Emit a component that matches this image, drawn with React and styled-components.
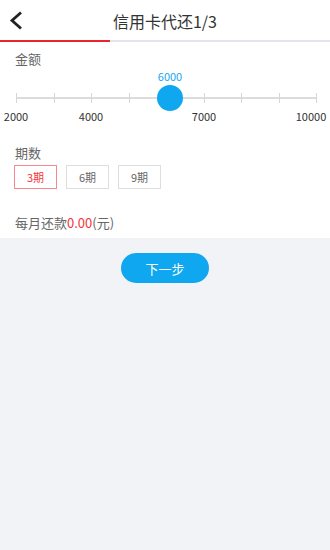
import styled, { createGlobalStyle } from "styled-components";

const GlobalStyle = createGlobalStyle`
  html, body {
    margin: 0;
    padding: 0;
    background: #f2f3f7;
    font-family: "Noto Sans CJK SC", "Noto Sans", sans-serif;
  }
`;

const ticks = [0, 1, 2, 3, 4, 5, 6, 7, 8];
const marks = [
  { label: "2000", x: 16 },
  { label: "4000", x: 91 },
  { label: "7000", x: 204 },
  { label: "10000", x: 311 },
];
const terms = ["3期", "6期", "9期"];

const App = () => {
  // const [term, setTerm] = useState(0);

  return (
    <>
      <GlobalStyle />
      <Page>
        <TopBar>
          <BackButton>
            <svg width="24" height="24" viewBox="0 0 24 24">
              <path d="M20 3.5 L11 11.5 L20 19.5" fill="none" stroke="#222" strokeWidth="2.8" strokeLinejoin="miter" />
            </svg>
          </BackButton>
          <Title>信用卡代还1/3</Title>
          <span />
        </TopBar>
        <StepLine>
          <StepDone />
          <StepLeft />
        </StepLine>
        <Form>
          <Label>金额</Label>
          <Slider>
            <ValueText>6000</ValueText>
            <Track />
            {ticks.map((i) => (
              <Tick key={i} style={{ left: 16 + i * 37.5 }} />
            ))}
            <Thumb />
            {marks.map((m) => (
              <Mark key={m.label} style={{ left: m.x }}>
                {m.label}
              </Mark>
            ))}
          </Slider>
          <Label $top={20}>期数</Label>
          <TermRow>
            {terms.map((t, i) => (
              <TermButton key={t} $active={i === 0}>
                {t}
              </TermButton>
            ))}
          </TermRow>
          <Summary>
            每月还款<Money>0.00</Money>(元)
          </Summary>
        </Form>
        <Bottom>
          <NextButton>下一步</NextButton>
        </Bottom>
      </Page>
    </>
  );
};

const Page = styled.div`
  width: 330px;
  min-height: 550px;
  background: #f2f3f7;
`;

const TopBar = styled.div`
  display: grid;
  grid-template-columns: 40px 1fr 40px;
  align-items: center;
  height: 40px;
  background: #fff;
`;

const BackButton = styled.div`
  display: flex;
  align-items: center;
  padding-left: 1px;
  padding-top: 2px;
`;

const Title = styled.div`
  text-align: center;
  font-size: 16px;
  color: #333;
  padding-top: 2px;
`;

const StepLine = styled.div`
  display: flex;
  height: 2px;
  background: #fff;
`;

const StepDone = styled.div`
  width: 110px;
  background: #e8262b;
`;

const StepLeft = styled.div`
  flex: 1;
  background: #e2e5ef;
`;

const Form = styled.div`
  background: #fff;
  padding: 8px 0 6px;
`;

const Label = styled.div`
  font-size: 13px;
  line-height: 18px;
  color: #666;
  padding: 0 15px;
  margin-top: ${(p) => p.$top || 0}px;
`;

const Slider = styled.div`
  position: relative;
  height: 56px;
`;

const ValueText = styled.div`
  position: absolute;
  top: 2px;
  left: 170px;
  transform: translateX(-50%);
  font-size: 11px;
  line-height: 13px;
  color: #16a6ee;
`;

const Track = styled.div`
  position: absolute;
  top: 29px;
  left: 16px;
  width: 300px;
  height: 2px;
  background: #dcdcdc;
`;

const Tick = styled.div`
  position: absolute;
  top: 25px;
  width: 1px;
  height: 10px;
  background: #d6d6d6;
`;

const Thumb = styled.div`
  position: absolute;
  top: 17px;
  left: 157px;
  width: 26px;
  height: 26px;
  border-radius: 50%;
  background: #0ea7f0;
`;

const Mark = styled.div`
  position: absolute;
  top: 42px;
  transform: translateX(-50%);
  font-size: 11px;
  line-height: 13px;
  color: #333;
`;

const TermRow = styled.div`
  display: flex;
  gap: 9px;
  padding: 0 14px;
  margin-top: 3px;
`;

const TermButton = styled.div`
  display: flex;
  align-items: center;
  justify-content: center;
  box-sizing: border-box;
  width: 43px;
  height: 24px;
  font-size: 11px;
  color: ${(p) => (p.$active ? "#f5333a" : "#666")};
  border: 1px solid ${(p) => (p.$active ? "#f7898c" : "#dedede")};
`;

const Summary = styled.div`
  font-size: 13px;
  line-height: 18px;
  color: #666;
  padding: 0 15px;
  margin-top: 25px;
`;

const Money = styled.span`
  color: #f5333a;
`;

const Bottom = styled.div`
  display: flex;
  justify-content: center;
  padding-top: 15px;
`;

const NextButton = styled.div`
  display: flex;
  align-items: center;
  justify-content: center;
  width: 88px;
  height: 30px;
  border-radius: 15px;
  background: #0ea7f0;
  color: #fff;
  font-size: 13px;
`;

export default App;
